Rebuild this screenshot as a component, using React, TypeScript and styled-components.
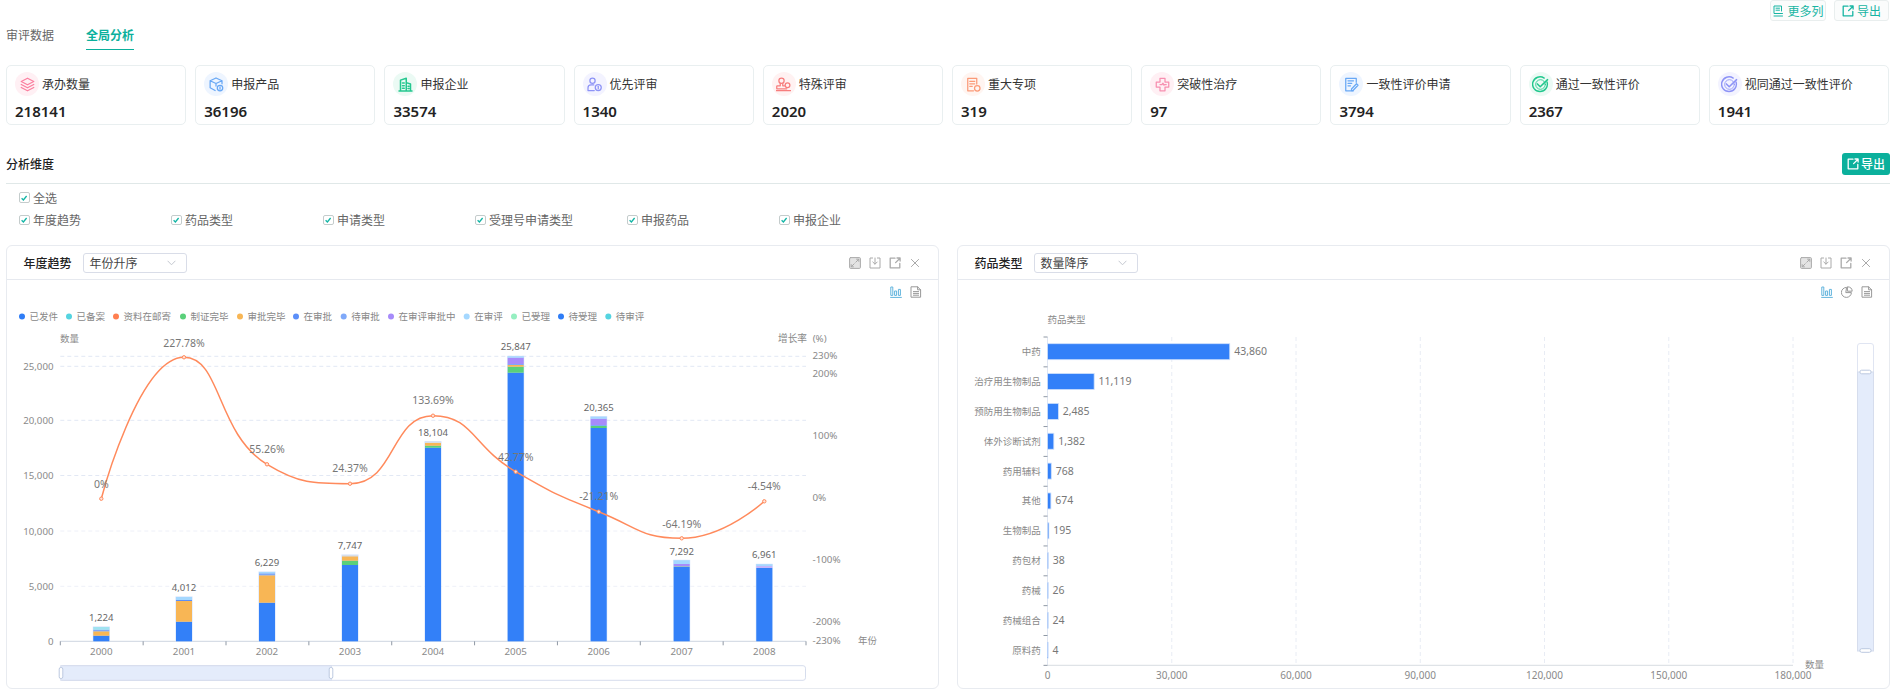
import React from 'react';
import styled, { createGlobalStyle } from 'styled-components';

const SANS = `"Noto Sans", "Noto Sans CJK SC", sans-serif`;
const TEAL = '#0bb09c';

const Global = createGlobalStyle`
  html, body { margin: 0; padding: 0; background: #fff; }
  body { font-family: ${SANS}; overflow: hidden; }
`;

const Page = styled.div`
  width: 1900px;
  height: 697px;
  box-sizing: border-box;
  padding: 0 10px 0 6px;
  overflow: hidden;
  background: #fff;
`;
const TopActions = styled.div`
  display: flex;
  justify-content: flex-end;
  gap: 8px;
  height: 21px;
  padding-right: 1px;
`;
const GhostButton = styled.button<{ $w: number }>`
  width: ${p => p.$w}px;
  height: 21px;
  box-sizing: border-box;
  display: flex;
  align-items: center;
  justify-content: center;
  gap: 3px;
  padding: 0;
  border: 1px solid #e9eeee;
  border-radius: 3px;
  background: #fbfcfc;
  color: #17b5a3;
  font: 400 12px ${SANS};
`;
const Tabs = styled.div`
  display: flex;
  gap: 32px;
  height: 28.5px;
`;
const Tab = styled.div<{ $active?: boolean }>`
  box-sizing: border-box;
  height: 28.5px;
  padding-top: 7px;
  line-height: 16px;
  font-size: 12px;
  font-weight: ${p => (p.$active ? 600 : 400)};
  color: ${p => (p.$active ? TEAL : '#666')};
  border-bottom: 1.5px solid ${p => (p.$active ? TEAL : 'transparent')};
`;
const Cards = styled.div`
  display: flex;
  gap: 9px;
  margin: 15.5px 1px 0 0;
`;
const Card = styled.div`
  flex: 1 1 0;
  height: 59.5px;
  box-sizing: border-box;
  border: 1px solid #e9eff0;
  border-radius: 5px;
  padding: 6px 8px 0;
`;
const CardHead = styled.div`
  display: flex;
  align-items: center;
  gap: 3px;
  height: 24px;
`;
const IconDisc = styled.span<{ $bg: string }>`
  width: 24px;
  height: 24px;
  flex: none;
  border-radius: 50%;
  background: ${p => p.$bg};
  display: flex;
  align-items: center;
  justify-content: center;
`;
const CardLabel = styled.span`
  font-size: 12px;
  color: #333;
  white-space: nowrap;
`;
const CardValue = styled.div`
  margin-top: 5px;
  font-size: 15px;
  line-height: 20px;
  font-weight: 600;
  color: #222;
`;
const AnalysisHead = styled.div`
  display: flex;
  align-items: center;
  justify-content: space-between;
  margin-top: 28px;
  padding-bottom: 7.5px;
  height: 23px;
  border-bottom: 1px solid #e0e8e8;
  box-sizing: content-box;
`;
const AnalysisTitle = styled.div`
  font-size: 12px;
  font-weight: 500;
  color: #222;
`;
const SolidButton = styled.button`
  width: 48px;
  height: 22px;
  display: flex;
  align-items: center;
  justify-content: center;
  gap: 2px;
  padding: 0;
  border: 0;
  border-radius: 3px;
  background: ${TEAL};
  color: #fff;
  font: 500 12px ${SANS};
`;
const CheckRow = styled.div`
  display: grid;
  grid-template-columns: repeat(6, 152px);
  height: 22.4px;
  align-items: center;
  padding-left: 13px;
`;
const CheckAllRow = styled(CheckRow)`
  margin-top: 2.4px;
`;
const CheckItem = styled.label`
  display: flex;
  align-items: center;
  gap: 3.5px;
  font-size: 12px;
  color: #666;
  white-space: nowrap;
`;
const CheckBox = styled.span`
  width: 10.5px;
  height: 10.5px;
  box-sizing: border-box;
  border: 1px solid #c4cccc;
  border-radius: 2px;
  display: flex;
  align-items: center;
  justify-content: center;
  background: #fff;
`;
const Panels = styled.div`
  display: flex;
  gap: 18px;
  margin-top: 14px;
`;
const Panel = styled.section`
  flex: 1 1 0;
  height: 444px;
  box-sizing: border-box;
  border: 1px solid #e8ebf0;
  border-radius: 6px;
  overflow: hidden;
`;
const PanelHead = styled.header`
  height: 34px;
  box-sizing: border-box;
  display: flex;
  align-items: center;
  padding: 0 17px 0 16.5px;
  border-bottom: 1px solid #e6e9ef;
`;
const PanelTitle = styled.h3`
  margin: 0 11.5px 0 0;
  font-size: 12px;
  font-weight: 500;
  color: #222;
`;
const Select = styled.div`
  width: 103.5px;
  height: 20px;
  box-sizing: border-box;
  display: flex;
  align-items: center;
  justify-content: space-between;
  padding: 0 10px 0 5.5px;
  border: 1px solid #d9dde8;
  border-radius: 3px;
  font-size: 12px;
  color: #444;
`;
const PanelActions = styled.div`
  margin-left: auto;
  display: flex;
  gap: 8px;
`;
const ChartTools = styled.div`
  height: 24px;
  display: flex;
  justify-content: flex-end;
  align-items: center;
  gap: 8px;
  padding: 0 16px 0 0;
`;
const ChartSvg = styled.svg`
  display: block;
  font-family: ${SANS};
`;

/* ---------- icons ---------- */
const Svg: React.FC<React.PropsWithChildren<{ s?: number; c: string; sw?: number }>> = ({ s = 12, c, sw = 1, children }) => (
  <svg width={s} height={s} viewBox="0 0 12 12" fill="none" stroke={c} strokeWidth={sw} strokeLinecap="round" strokeLinejoin="round">
    {children}
  </svg>
);
const ExportIcon = ({ c }: { c: string }) => (
  <Svg c={c} sw={1.3}>
    <path d="M6 1.2H1.2v9.6h9.6V6.4M6.6 5.6 11 1.2M8 1h3.1v3" />
  </Svg>
);
const ColumnsIcon = ({ c }: { c: string }) => (
  <Svg c={c}>
    <path d="M9.5 6V1H2v7.5h8.5M2 11h8.5M4 3.2h3.5M4 5.2h3.5" />
  </Svg>
);
const ExpandIcon = () => (
  <Svg c="#aaa">
    <rect x=".6" y=".6" width="10.8" height="10.8" rx="1" fill="#e4e4e4" />
    <path d="M6.8 5.2 9.6 2.4M7.6 2.2h2.2v2.2M5.2 6.8 2.4 9.6M2.2 7.6v2.2h2.2" />
  </Svg>
);
const SaveIcon = () => (
  <Svg c="#aaa">
    <path d="M3.6 1H1v10h10V1H8.4M6 1v6M3.8 5 6 7.2 8.2 5" />
  </Svg>
);
const CloseIcon = () => (
  <Svg c="#aaa">
    <path d="M2.4 2.4 9.6 9.6M9.6 2.4 2.4 9.6" />
  </Svg>
);
const BarsIcon = () => (
  <Svg c="#62b4dd">
    <path d="M.6 11.4h10.8M1.2 1h1.6v8.4H1.2zM5 5h1.6v4.4H5zM8.8 3.4h1.6v6H8.8z" />
  </Svg>
);
const PieIcon = () => (
  <Svg c="#999">
    <path d="M5.2 1.4a5 5 0 1 0 5.2 5.2H5.2z" />
    <path d="M6.8.8a4.6 4.6 0 0 1 4.4 4.4H6.8z" />
  </Svg>
);
const DocIcon = () => (
  <Svg c="#999">
    <path d="M1.4.8h6.2l3 3v7.4H1.4zM7.6.8v3h3M3.4 5.6h5.2M3.4 7.4h5.2M3.4 9.2h5.2" />
  </Svg>
);
const Chevron = () => (
  <svg width="9" height="6" viewBox="0 0 9 6" fill="none" stroke="#c4c8d0" strokeWidth="1">
    <path d="M.6.8 4.5 4.8 8.4.8" />
  </svg>
);
const Tick = () => (
  <svg width="8" height="8" viewBox="0 0 8 8" fill="none" stroke="#12b5a5" strokeWidth="1.3">
    <path d="M1.6 4.2 3.4 6 6.6 2" />
  </svg>
);

const cardIcons: Record<string, React.ReactNode> = {
  stack: (
    <Svg s={15} c="#fb7f9f">
      <path d="M6 1 11 3.6 6 6.2 1 3.6zM1 6l5 2.6L11 6M1 8.4 6 11l5-2.6" />
    </Svg>
  ),
  box: (
    <Svg s={15} c="#68a8f5">
      <path d="M5.6.8 10.4 3v2.4M5.6.8.9 3v5.6l4 2.2M.9 3l4.7 2.2L10.4 3M5.6 5.2v2" />
      <circle cx="8.8" cy="8.8" r="2.2" />
      <path d="M8.8 7.9v1.8" />
    </Svg>
  ),
  building: (
    <Svg s={15} c="#25c78f" sw={1.2}>
      <path d="M2 11V2.5L6.6 1v10M6.6 4.5 10 5.6V11M.8 11.2h10.4M3.6 4.8h1.4M3.6 7h1.4M3.6 9h1.4M8 7.4h.8M8 9.2h.8" />
    </Svg>
  ),
  medal: (
    <Svg s={15} c="#8d93f6">
      <circle cx="4.4" cy="3" r="2.1" />
      <path d="M.8 10.8V8.6c0-1.3 1-2.3 2.4-2.3h2.2M.8 10.8h5" />
      <circle cx="9" cy="8.4" r="2.4" />
      <path d="M9 7.4v2" />
    </Svg>
  ),
  stamp: (
    <Svg s={15} c="#f77d7d">
      <circle cx="4.4" cy="3" r="2.1" />
      <path d="M3.4 5v2H1a.6.6 0 0 0-.4.4v2h8M5.4 5v2h1.4" />
      <path d="M.4 10.8h11.2" />
      <circle cx="9.2" cy="6.6" r="1.9" />
    </Svg>
  ),
  report: (
    <Svg s={15} c="#fb9a78">
      <path d="M6 11H1.4V1h7.2v4.6M3 3.4h4M3 5.4h4M3 7.4h2" />
      <circle cx="9" cy="9" r="2.2" />
    </Svg>
  ),
  cross: (
    <Svg s={15} c="#f78fb0">
      <path d="M4 1h4v3h3v4H8v3H4V8H1V4h3z" />
      <path d="M4 6h1.6l.8-1 .8 1.6.4-.6H9" />
    </Svg>
  ),
  edit: (
    <Svg s={15} c="#68a8f5">
      <path d="M9.8 4.2V1H1.4v10h6M3.2 3h4.4M3.2 5h3M3.2 7h2" />
      <path d="M6 9.6 10 5.4l1.2 1.2-4 4.2H6z" />
    </Svg>
  ),
  checkG: (
    <Svg s={17} c="#21c78d" sw={1}>
      <path d="M10.6 4.2A5.2 5.2 0 1 1 8.6 1.5" />
      <circle cx="6" cy="6" r="3.4" strokeWidth=".6" />
      <path d="M3.8 5.6 5.8 7.6 11 2.6" strokeWidth="1.1" />
    </Svg>
  ),
  checkP: (
    <Svg s={17} c="#8d93f6" sw={1}>
      <path d="M10.6 4.2A5.2 5.2 0 1 1 8.6 1.5" />
      <circle cx="6" cy="6" r="3.4" strokeWidth=".6" />
      <path d="M3.8 5.6 5.8 7.6 11 2.6" strokeWidth="1.1" />
    </Svg>
  ),
};

const stats = [
  { label: '承办数量', value: '218141', icon: 'stack', bg: '#fff0f4' },
  { label: '申报产品', value: '36196', icon: 'box', bg: '#eef5ff' },
  { label: '申报企业', value: '33574', icon: 'building', bg: '#ebfaf4' },
  { label: '优先评审', value: '1340', icon: 'medal', bg: '#f3f3ff' },
  { label: '特殊评审', value: '2020', icon: 'stamp', bg: '#fff2f2' },
  { label: '重大专项', value: '319', icon: 'report', bg: '#fff5f1' },
  { label: '突破性治疗', value: '97', icon: 'cross', bg: '#fff0f4' },
  { label: '一致性评价申请', value: '3794', icon: 'edit', bg: '#eef5ff' },
  { label: '通过一致性评价', value: '2367', icon: 'checkG', bg: '#ebfaf4' },
  { label: '视同通过一致性评价', value: '1941', icon: 'checkP', bg: '#f3f3ff' },
];
const dims = ['年度趋势', '药品类型', '申请类型', '受理号申请类型', '申报药品', '申报企业'];

/* ---------- trend chart data (page coordinates) ---------- */
const BLUE = '#3380f8';
const OR = '#f8b655';
const GR = '#5ad07a';
const B2 = '#7fa9f9';
const PU = '#a78bfa';
const LB = '#a5d8ff';
const LC = '#9fe3f0';

const legend: [string, string, number][] = [
  ['已发件', '#2f7df6', 22], ['已备案', '#55d4e0', 69], ['资料在邮寄', '#ff7f50', 116], ['制证完毕', '#5ad07a', 183],
  ['审批完毕', '#f8b655', 240], ['在审批', '#5b8ff9', 296], ['待审批', '#7fa9f9', 343.7], ['在审评审批中', '#a78bfa', 391],
  ['在审评', '#a5d8ff', 466.7], ['已受理', '#96efc1', 514], ['待受理', '#2f7df6', 561], ['待审评', '#55d4e0', 608.3],
];
const years = [
  { y: '2000', x: 101.3, ly: 498.7, pct: '0%', py: 483.7, total: '1,224', ty: 617.7, stops: [[635.7, BLUE], [631.3, OR], [629.7, B2], [627, LC]] },
  { y: '2001', x: 184, ly: 357.3, pct: '227.78%', py: 343, total: '4,012', ty: 587, stops: [[621.7, BLUE], [601, OR], [600, '#5b8ff9'], [597, LB]] },
  { y: '2002', x: 267, ly: 464.3, pct: '55.26%', py: 449.3, total: '6,229', ty: 562.3, stops: [[602.7, BLUE], [575.3, OR], [573.3, B2], [572, LB]] },
  { y: '2003', x: 350, ly: 483.7, pct: '24.37%', py: 468.3, total: '7,747', ty: 545.7, stops: [[565, BLUE], [560.7, GR], [556.3, OR], [555, '#d8dfe8']] },
  { y: '2004', x: 433, ly: 415.7, pct: '133.69%', py: 400.3, total: '18,104', ty: 432, stops: [[447.7, BLUE], [445.7, GR], [443, OR], [441.7, '#d8dfe8']] },
  { y: '2005', x: 515.7, ly: 471.7, pct: '42.77%', py: 457.3, total: '25,847', ty: 346.3, stops: [[372.7, BLUE], [366.7, GR], [365, OR], [364, B2], [357.7, PU], [356.3, LB]] },
  { y: '2006', x: 598.7, ly: 511.7, pct: '-21.21%', py: 496.3, total: '20,365', ty: 407, stops: [[428, BLUE], [426, GR], [425, B2], [418.7, PU], [416.7, LB]] },
  { y: '2007', x: 681.7, ly: 538.3, pct: '-64.19%', py: 523.7, total: '7,292', ty: 551, stops: [[567, BLUE], [566, '#9db8c8'], [564, PU], [560.3, LB]] },
  { y: '2008', x: 764.3, ly: 501.3, pct: '-4.54%', py: 486, total: '6,961', ty: 554.3, stops: [[568, BLUE], [566, '#c3b5fb'], [564.3, LB]] },
];
const BASE = 641.3;
const L = 60.3;
const R = 806;

/* constrained smoothing: control points never pass a neighbour's value */
function smoothPath(pts: [number, number][], smooth = 0.5) {
  const n = pts.length;
  const clamp = (v: number, a: number, b: number) => Math.min(Math.max(v, Math.min(a, b)), Math.max(a, b));
  let d = `M${pts[0][0]} ${pts[0][1]}`;
  let c0: [number, number] = pts[0];
  for (let i = 1; i < n; i++) {
    const [x, y] = pts[i];
    const [px, py] = pts[i - 1];
    let c1: [number, number] = [x, y];
    let nc: [number, number] = [x, y];
    if (i < n - 1) {
      const [nx, ny] = pts[i + 1];
      const a = Math.hypot(x - px, y - py);
      const b = Math.hypot(nx - x, ny - y);
      const r = b / (a + b);
      let ox = clamp(x + (nx - px) * smooth * r, x, nx);
      let oy = clamp(y + (ny - py) * smooth * r, y, ny);
      const ix = clamp(x - ((ox - x) * a) / b, px, x);
      const iy = clamp(y - ((oy - y) * a) / b, py, y);
      ox = x + ((x - ix) * b) / a;
      oy = y + ((y - iy) * b) / a;
      c1 = [ix, iy];
      nc = [ox, oy];
    }
    d += `C${c0[0]} ${c0[1]} ${c1[0]} ${c1[1]} ${x} ${y}`;
    c0 = nc;
  }
  return d;
}

const AXIS = '#8a8a8a';

const TrendChart = () => (
  <ChartSvg width={931} height={384} viewBox="7 304 931 384">
    {legend.map(([t, c, x]) => (
      <g key={t}>
        <circle cx={x} cy={316.5} r={3} fill={c} />
        <text x={x + 7.5} y={320} fontSize={9.5} fill="#888">{t}</text>
      </g>
    ))}
    <text x={60} y={342} fontSize={9.5} fill={AXIS}>数量</text>
    <text x={778} y={342} fontSize={9.7} fill={AXIS}>增长率</text>
    <text x={812.7} y={342} fontSize={9.7} fill={AXIS}>(%)</text>
    {[356.3, 366.3, 420.3, 475.5].map(y => (
      <line key={y} x1={L} x2={R} y1={y} y2={y} stroke="#e2e8f4" strokeDasharray="4 3" />
    ))}
    {[531, 586.3].map(y => (
      <line key={y} x1={L} x2={R} y1={y} y2={y} stroke="#eef0f8" strokeDasharray="4 3" />
    ))}
    {[['25,000', 370], ['20,000', 424], ['15,000', 479], ['10,000', 534.5], ['5,000', 590], ['0', 644.5]].map(([t, y]) => (
      <text key={t} x={53.5} y={y} fontSize={9.7} fill={AXIS} textAnchor="end">{t}</text>
    ))}
    {[['230%', 358.5], ['200%', 376.5], ['100%', 439], ['0%', 500.5], ['-100%', 562.5], ['-200%', 624.5], ['-230%', 643.5]].map(([t, y]) => (
      <text key={t} x={812.5} y={y} fontSize={9.8} fill={AXIS}>{t}</text>
    ))}
    <text x={858} y={643.5} fontSize={9.5} fill={AXIS}>年份</text>
    <line x1={L} x2={R} y1={BASE} y2={BASE} stroke="#cdd5e0" />
    {Array.from({ length: 10 }).map((_, i) => {
      const x = L + ((R - L) / 9) * i;
      return <line key={i} x1={x} x2={x} y1={BASE} y2={BASE + 4} stroke="#8f98a4" />;
    })}
    {years.map(b => {
      let prev = BASE;
      const top = b.stops[b.stops.length - 1][0] as number;
      return (
        <g key={b.y}>
          <rect x={b.x - 8.5} y={top - 0.5} width={17} height={BASE - top + 0.5} fill="#cfe0fb" />
          {b.stops.map(([t, c], i) => {
            const seg = <rect key={i} x={b.x - 8} y={t as number} width={16} height={prev - (t as number)} fill={c as string} />;
            prev = t as number;
            return seg;
          })}
          <text x={b.x} y={b.ty + 3.5} fontSize={9.6} fill="#666" textAnchor="middle">{b.total}</text>
          <text x={b.x} y={654.8} fontSize={9.8} fill={AXIS} textAnchor="middle">{b.y}</text>
        </g>
      );
    })}
    <path d={smoothPath(years.map(b => [b.x, b.ly] as [number, number]))} fill="none" stroke="#ff8a5c" strokeWidth={1.5} />
    {years.map(b => (
      <g key={b.pct}>
        <circle cx={b.x} cy={b.ly} r={1.7} fill="#ffe5da" stroke="#ff8a5c" />
        <text x={b.x} y={b.py + 4} fontSize={10.5} fill="#777" textAnchor="middle">{b.pct}</text>
      </g>
    ))}
    <rect x={L + 0.5} y={665.7} width={R - L - 1} height={14.6} rx={2.5} fill="#fff" stroke="#d6dded" />
    <rect x={L + 0.5} y={665.7} width={270.5} height={14.6} fill="#e4ecfb" stroke="#d6dded" />
    {[61, 331].map(x => (
      <rect key={x} x={x - 1.8} y={667.5} width={3.6} height={11} rx={1.6} fill="#fff" stroke="#bcc9e0" />
    ))}
  </ChartSvg>
);

const drugs: [string, number][] = [
  ['中药', 43860], ['治疗用生物制品', 11119], ['预防用生物制品', 2485], ['体外诊断试剂', 1382], ['药用辅料', 768], ['其他', 674],
  ['生物制品', 195], ['药包材', 38], ['药械', 26], ['药械组合', 24], ['原料药', 4],
];
const X0 = 1047.5;
const PXU = (1793 - X0) / 180000;

const DrugChart = () => (
  <ChartSvg width={931} height={384} viewBox="958 304 931 384">
    <text x={1047.5} y={322.5} fontSize={9.5} fill={AXIS}>药品类型</text>
    {[30000, 60000, 90000, 120000, 150000, 180000].map(v => (
      <line key={v} x1={X0 + v * PXU} x2={X0 + v * PXU} y1={337} y2={665.3} stroke="#e8ecf4" strokeDasharray="4 3" />
    ))}
    <line x1={X0} x2={X0} y1={337} y2={665.3} stroke="#e0e6f1" />
    <line x1={X0} x2={1793} y1={665.3} y2={665.3} stroke="#d8dde2" />
    {Array.from({ length: 12 }).map((_, i) => {
      const y = 337 + 29.85 * i;
      return <line key={i} x1={X0 - 4} x2={X0} y1={y} y2={y} stroke="#8f98a4" />;
    })}
    {drugs.map(([name, v], i) => {
      const cy = 351.7 + 29.85 * i;
      const w = v * PXU;
      return (
        <g key={name}>
          <text x={1040.7} y={cy + 3.5} fontSize={9.5} fill={AXIS} textAnchor="end">{name}</text>
          <rect x={X0} y={cy - 8} width={w + 0.6} height={16} fill={BLUE} stroke="#cfe0fb" strokeWidth={v < 100 ? 0.6 : 0.8} />
          <text x={X0 + w + 5} y={cy + 3.5} fontSize={10.5} fill="#777">{v.toLocaleString('en-US')}</text>
        </g>
      );
    })}
    {[0, 30000, 60000, 90000, 120000, 150000, 180000].map(v => (
      <text key={v} x={X0 + v * PXU} y={678.5} fontSize={10} fill={AXIS} textAnchor="middle">{v.toLocaleString('en-US')}</text>
    ))}
    <text x={1805} y={667.5} fontSize={9.5} fill={AXIS}>数量</text>
    <rect x={1857.5} y={343.5} width={16} height={307.5} rx={2.5} fill="#fff" stroke="#e0e5f2" />
    <rect x={1857.5} y={372} width={16} height={279} fill="#e4ecfb" stroke="#d6dded" />
    {[372, 650.5].map(y => (
      <rect key={y} x={1860} y={y - 1.8} width={11} height={3.6} rx={1.6} fill="#fff" stroke="#bcc9e0" />
    ))}
  </ChartSvg>
);

const PanelBar = ({ title, value }: { title: string; value: string }) => (
  <PanelHead>
    <PanelTitle>{title}</PanelTitle>
    <Select>
      {value}
      <Chevron />
    </Select>
    <PanelActions>
      <ExpandIcon />
      <SaveIcon />
      <ExportIcon c="#aaa" />
      <CloseIcon />
    </PanelActions>
  </PanelHead>
);

export default function App() {
  return (
    <Page>
      <Global />
      <TopActions>
        <GhostButton $w={56}><ColumnsIcon c="#17b5a3" /> 更多列</GhostButton>
        <GhostButton $w={55}><ExportIcon c="#17b5a3" />导出</GhostButton>
      </TopActions>
      <Tabs>
        <Tab>审评数据</Tab>
        <Tab $active>全局分析</Tab>
      </Tabs>
      <Cards>
        {stats.map(s => (
          <Card key={s.label}>
            <CardHead>
              <IconDisc $bg={s.bg}>{cardIcons[s.icon]}</IconDisc>
              <CardLabel>{s.label}</CardLabel>
            </CardHead>
            <CardValue>{s.value}</CardValue>
          </Card>
        ))}
      </Cards>
      <AnalysisHead>
        <AnalysisTitle>分析维度</AnalysisTitle>
        <SolidButton><ExportIcon c="#fff" />导出</SolidButton>
      </AnalysisHead>
      <CheckAllRow>
        <CheckItem><CheckBox><Tick /></CheckBox>全选</CheckItem>
      </CheckAllRow>
      <CheckRow>
        {dims.map(d => (
          <CheckItem key={d}><CheckBox><Tick /></CheckBox>{d}</CheckItem>
        ))}
      </CheckRow>
      <Panels>
        <Panel>
          <PanelBar title="年度趋势" value="年份升序" />
          <ChartTools><BarsIcon /><DocIcon /></ChartTools>
          <TrendChart />
        </Panel>
        <Panel>
          <PanelBar title="药品类型" value="数量降序" />
          <ChartTools><BarsIcon /><PieIcon /><DocIcon /></ChartTools>
          <DrugChart />
        </Panel>
      </Panels>
    </Page>
  );
}
